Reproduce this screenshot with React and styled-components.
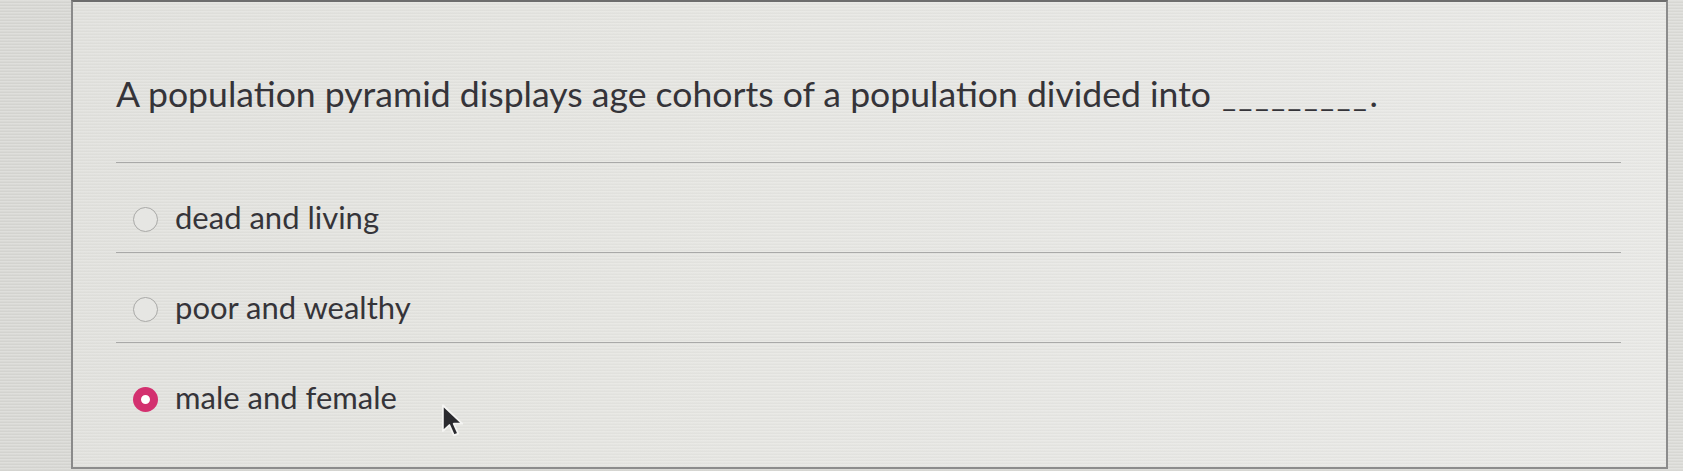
import React from "react";
import styled, { createGlobalStyle } from "styled-components";

const Global = createGlobalStyle`
  html, body {
    margin: 0;
    padding: 0;
    width: 1683px;
    height: 471px;
    overflow: hidden;
    background: #d9d9d5;
  }
  #root { height: 471px; }
`;

const Page = styled.div`
  position: relative;
  height: 471px;
  padding-left: 71px;
  box-sizing: border-box;
  display: flex;
  background:
    repeating-linear-gradient(
      180deg,
      rgba(255, 255, 255, 0.18) 0px,
      rgba(255, 255, 255, 0.18) 1px,
      rgba(0, 0, 0, 0.025) 2px,
      rgba(0, 0, 0, 0.025) 3px
    ),
    linear-gradient(90deg, #d8d8d4, #dcdcd8);
  font-family: Lato, "Open Sans", sans-serif;
`;

const Card = styled.div`
  width: 1597px;
  height: 469px;
  box-sizing: border-box;
  border-left: 2px solid #8a8a8a;
  border-right: 2px solid #8c8c8c;
  border-top: 2px solid #6d6d6d;
  border-bottom: 2px solid #8c8c8c;
  padding: 71px 45px 0 43px;
  background:
    repeating-linear-gradient(
      180deg,
      rgba(255, 255, 255, 0.14) 0px,
      rgba(255, 255, 255, 0.14) 1px,
      rgba(0, 0, 0, 0.018) 2px,
      rgba(0, 0, 0, 0.018) 3px
    ),
    linear-gradient(100deg, #e1e1dd 0%, #e6e6e2 45%, #e9e9e6 100%);
`;

const Question = styled.div`
  font-size: 35.6px;
  line-height: 42px;
  color: #353439;
  margin-bottom: 46px;
`;

const Blank = styled.span`
  margin-left: 2px;
  letter-spacing: 2.6px;
  font-size: 30px;
`;

const Divider = styled.div`
  height: 1px;
  background: #a9a9a8;
`;

const Option = styled.label`
  display: flex;
  align-items: center;
  gap: 17px;
  padding: 35px 0 16px 17px;
  font-size: 31px;
  line-height: 38px;
  color: #353439;
`;

const Radio = styled.span`
  width: 25px;
  height: 25px;
  margin-top: 4px;
  border-radius: 50%;
  box-sizing: border-box;
  flex: none;
  border: ${(p) => (p.$checked ? "8px solid #d3306f" : "1.5px solid #a9a9a7")};
  background: ${(p) => (p.$checked ? "#ffffff" : "#e6e6e3")};
`;

const Cursor = styled.svg`
  position: absolute;
  left: 440px;
  top: 403px;
  width: 26px;
  height: 36px;
`;

const options = [
  { label: "dead and living", checked: false },
  { label: "poor and wealthy", checked: false },
  { label: "male and female", checked: true },
];

export default function App() {
  return (
    <>
      <Global />
      <Page>
        <Card>
          <Question>
            A population pyramid displays age cohorts of a population divided into{" "}
            <Blank>_________</Blank>.
          </Question>
          <Divider />
          {options.map((o, i) => (
            <React.Fragment key={o.label}>
              <Option>
                <Radio $checked={o.checked} />
                {o.label}
              </Option>
              {i < options.length - 1 && <Divider />}
            </React.Fragment>
          ))}
        </Card>
        <Cursor viewBox="0 0 22 32">
          <path
            d="M2 2 L2 25 L7.8 19.6 L11.8 28.8 L15.6 27.2 L11.6 18.4 L19.2 18.4 Z"
            fill="#2a2a2e"
            stroke="#f4f4f2"
            strokeWidth="1.6"
            strokeLinejoin="round"
          />
        </Cursor>
      </Page>
    </>
  );
}
